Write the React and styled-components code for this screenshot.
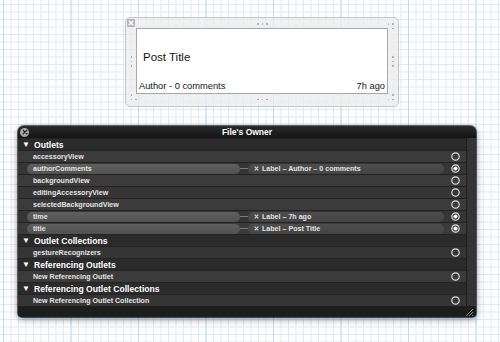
import React from "react";
import styled, { createGlobalStyle } from "styled-components";

const GlobalStyle = createGlobalStyle`
  html, body {
    margin: 0;
    padding: 0;
  }
  body {
    width: 500px;
    height: 342px;
    overflow: hidden;
    background-color: #fff;
    background-image:
      linear-gradient(to right, #c2daf6 1px, transparent 1px),
      linear-gradient(to right, #dde9f9 1px, transparent 1px),
      linear-gradient(to bottom, #dde9f9 1px, transparent 1px);
    background-size: 67.5px 100%, 7.5px 7.5px, 7.5px 7.5px;
    background-position: 3px 0, 3px 0, 0 4px;
    font-family: "Liberation Sans", Arial, sans-serif;
  }
`;

const Canvas = styled.div`
  display: flex;
  flex-direction: column;
  align-items: flex-start;
  padding-top: 17px;
`;

/* ---------- table view cell preview ---------- */

const CellFrame = styled.div`
  position: relative;
  box-sizing: border-box;
  width: 274px;
  height: 90px;
  margin-left: 125px;
  padding: 10px 10px 0 10px;
  border: 1px solid #c6c6c6;
  border-radius: 5px;
  background: rgba(236, 236, 236, 0.78);
`;

const FrameClose = styled.div`
  position: absolute;
  left: 1px;
  top: 1px;
  width: 8px;
  height: 8px;
  border-radius: 1px;
  background: #b2b2b2;
  display: flex;
  align-items: center;
  justify-content: center;
`;

const Dots = styled.div`
  position: absolute;
  display: flex;
  flex-direction: ${({ vertical }) => (vertical ? "column" : "row")};
  gap: 3px;
  ${({ pos }) => pos}
`;

const Dot = styled.span`
  width: 1.5px;
  height: 1.5px;
  border-radius: 50%;
  background: #a9a9a9;
`;

const Cell = styled.div`
  box-sizing: border-box;
  width: 252px;
  height: 66px;
  border: 1px solid #a9a9a9;
  background: #fff;
  display: flex;
  flex-direction: column;
  color: #161616;
`;

const CellTitle = styled.div`
  flex: 1;
  display: flex;
  align-items: center;
  padding: 3px 0 0 6px;
  font-size: 11.5px;
`;

const CellFooter = styled.div`
  display: flex;
  justify-content: space-between;
  padding: 0 2px 1px 2px;
  font-size: 9.3px;
  line-height: 11px;
`;

/* ---------- connections panel ---------- */

const Panel = styled.div`
  width: 458px;
  margin: 19px 0 0 18px;
  border-radius: 6px 6px 4px 4px;
  overflow: hidden;
  background: #222;
  box-shadow: 0 2px 7px rgba(0, 0, 0, 0.5), 0 0 0 1px rgba(0, 0, 0, 0.55);
`;

const TitleBar = styled.div`
  height: 12px;
  display: grid;
  grid-template-columns: 1fr auto 1fr;
  align-items: center;
  background: linear-gradient(#2a2a2a, #141414);
  color: #fff;
  font-weight: bold;
  font-size: 8.5px;
`;

const RoundClose = styled.div`
  justify-self: start;
  margin-left: 2px;
  width: 9px;
  height: 9px;
  border-radius: 50%;
  background: radial-gradient(circle at 50% 35%, #c4c4c4, #8f8f8f);
  display: flex;
  align-items: center;
  justify-content: center;
`;

const Body = styled.div`
  display: flex;
`;

const List = styled.div`
  width: 448px;
  display: flex;
  flex-direction: column;
`;

const SideColumn = styled.div`
  flex: 1;
  background: #343434;
  border-left: 1px solid #1d1d1d;
`;

const Row = styled.div`
  box-sizing: border-box;
  height: 12px;
  display: flex;
  align-items: center;
  padding-right: 6px;
  border-top: 1px solid #232323;
  background: ${({ alt }) => (alt ? "#353535" : "#3b3b3b")};
  color: #e4e4e4;
  font-weight: bold;
  font-size: 7.1px;
`;

const HeaderRow = styled.div`
  box-sizing: border-box;
  height: 12px;
  display: flex;
  align-items: center;
  padding-left: 4px;
  border-top: 1px solid #232323;
  background: #2b2b2b;
  color: #fff;
  font-weight: bold;
  font-size: 8.6px;
`;

const Triangle = styled.span`
  width: 12px;
  font-size: 8px;
  line-height: 1;
`;

const Name = styled.span`
  flex: 1;
  padding-left: 15px;
  white-space: nowrap;
`;

const SourcePill = styled.div`
  box-sizing: border-box;
  width: 213px;
  height: 10px;
  margin-left: 9px;
  padding-left: 6px;
  border-radius: 5px;
  background: linear-gradient(#5f5f5f, #525252);
  display: flex;
  align-items: center;
`;

const Connector = styled.div`
  width: 8px;
  height: 1px;
  background: #7a7a7a;
`;

const TargetPill = styled.div`
  flex: 1;
  box-sizing: border-box;
  height: 10px;
  margin-right: 7px;
  padding-left: 6px;
  border-radius: 5px;
  background: linear-gradient(#4d4d4d, #444);
  display: flex;
  align-items: center;
  gap: 3px;
  white-space: nowrap;
`;

const Footer = styled.div`
  height: 10px;
  background: #1d1d1d;
  display: flex;
  justify-content: flex-end;
  align-items: flex-end;
  padding: 0 3px 1px 0;
`;

const CrossIcon = ({ size = 5, color = "#fff", width = 1.3 }) => (
  <svg width={size} height={size} viewBox="0 0 10 10">
    <path d="M2 2 L8 8 M8 2 L2 8" stroke={color} strokeWidth={width * 2} strokeLinecap="round" />
  </svg>
);

const OutletCircle = ({ connected }) => (
  <svg width="9" height="9" viewBox="0 0 9 9">
    <circle cx="4.5" cy="4.5" r="3.7" fill="none" stroke="#dcdcdc" strokeWidth="1.2" />
    {connected && <circle cx="4.5" cy="4.5" r="2.1" fill="#fff" />}
  </svg>
);

const Grip = () => (
  <svg width="8" height="8" viewBox="0 0 8 8">
    <path d="M1 8 L8 1 M4 8 L8 4 M7 8 L8 7" stroke="#8a8a8a" strokeWidth="1" />
  </svg>
);

const sections = [
  {
    title: "Outlets",
    items: [
      { name: "accessoryView" },
      { name: "authorComments", target: "Label – Author – 0 comments" },
      { name: "backgroundView" },
      { name: "editingAccessoryView" },
      { name: "selectedBackgroundView" },
      { name: "time", target: "Label – 7h ago" },
      { name: "title", target: "Label – Post Title" },
    ],
  },
  { title: "Outlet Collections", items: [{ name: "gestureRecognizers" }] },
  { title: "Referencing Outlets", items: [{ name: "New Referencing Outlet" }] },
  {
    title: "Referencing Outlet Collections",
    items: [{ name: "New Referencing Outlet Collection" }],
  },
];

const handles = [
  { pos: "top: 5px; left: 131px;", n: 3 },
  { pos: "bottom: 6px; left: 131px;", n: 3 },
  { pos: "top: 38px; left: 4.5px;", n: 3, vertical: true },
  { pos: "top: 38px; right: 4.5px;", n: 3, vertical: true },
  { pos: "top: 5px; right: 4.5px;", n: 2 },
  { pos: "top: 9.5px; right: 4.5px;", n: 1 },
  { pos: "bottom: 6px; left: 4.5px;", n: 2 },
  { pos: "bottom: 10.5px; left: 4.5px;", n: 1 },
  { pos: "bottom: 6px; right: 4.5px;", n: 2 },
  { pos: "bottom: 10.5px; right: 4.5px;", n: 1 },
];

const App = () => {
  let rowIndex = 0;
  return (
    <>
      <GlobalStyle />
      <Canvas>
        <CellFrame>
          <FrameClose>
            <CrossIcon size={6} />
          </FrameClose>
          {handles.map((h, i) => (
            <Dots key={i} pos={h.pos} vertical={h.vertical}>
              {Array.from({ length: h.n }).map((_, j) => (
                <Dot key={j} />
              ))}
            </Dots>
          ))}
          <Cell>
            <CellTitle>Post Title</CellTitle>
            <CellFooter>
              <span>Author - 0 comments</span>
              <span>7h ago</span>
            </CellFooter>
          </Cell>
        </CellFrame>

        <Panel>
          <TitleBar>
            <RoundClose>
              <CrossIcon size={6} color="#2a2a2a" width={1.2} />
            </RoundClose>
            <span>File's Owner</span>
            <span />
          </TitleBar>
          <Body>
            <List>
              {sections.map((s) => (
                <React.Fragment key={s.title}>
                  <HeaderRow>
                    <Triangle>▼</Triangle>
                    {s.title}
                  </HeaderRow>
                  {s.items.map((item) => {
                    const alt = rowIndex++ % 2 === 1;
                    return (
                      <Row key={item.name} alt={alt}>
                        {item.target ? (
                          <>
                            <SourcePill>{item.name}</SourcePill>
                            <Connector />
                            <TargetPill>
                              <CrossIcon size={5} color="#cfcfcf" width={1.1} />
                              {item.target}
                            </TargetPill>
                          </>
                        ) : (
                          <Name>{item.name}</Name>
                        )}
                        <OutletCircle connected={!!item.target} />
                      </Row>
                    );
                  })}
                </React.Fragment>
              ))}
            </List>
            <SideColumn />
          </Body>
          <Footer>
            <Grip />
          </Footer>
        </Panel>
      </Canvas>
    </>
  );
};

export default App;
